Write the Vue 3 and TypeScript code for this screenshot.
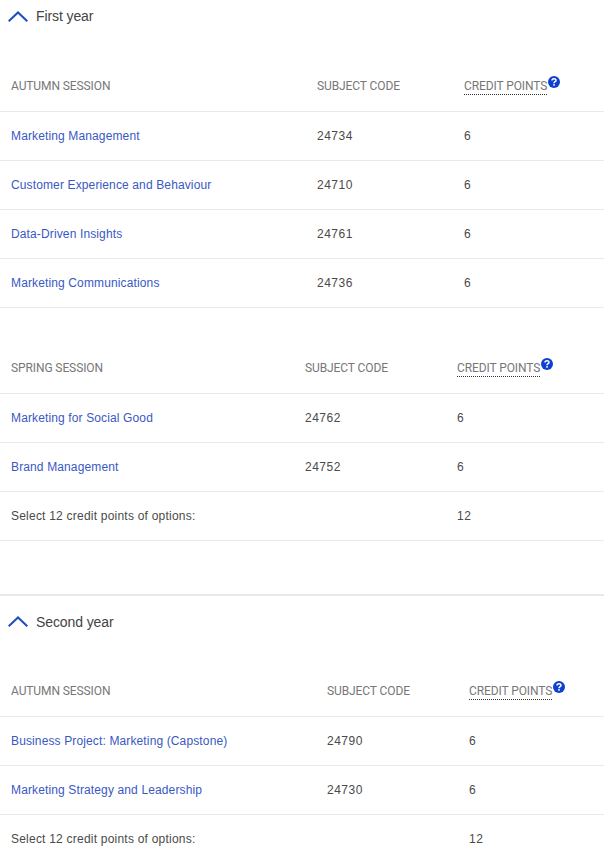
<script setup lang="ts">
interface Row { name: string; code?: string; cp: string; link: boolean }
interface Table { title: string; cols: string; rows: Row[] }
interface Section { title: string; tables: Table[] }
const r = (name: string, code: string, cp = '6'): Row => ({ name, code, cp, link: true })
const opt: Row = { name: 'Select 12 credit points of options:', cp: '12', link: false }
const sections: Section[] = [
  { title: 'First year', tables: [
    { title: 'AUTUMN SESSION', cols: 'c1', rows: [r('Marketing Management', '24734'), r('Customer Experience and Behaviour', '24710'), r('Data-Driven Insights', '24761'), r('Marketing Communications', '24736')] },
    { title: 'SPRING SESSION', cols: 'c2', rows: [r('Marketing for Social Good', '24762'), r('Brand Management', '24752'), opt] },
  ] },
  { title: 'Second year', tables: [
    { title: 'AUTUMN SESSION', cols: 'c3', rows: [r('Business Project: Marketing (Capstone)', '24790'), r('Marketing Strategy and Leadership', '24730'), opt] },
  ] },
]
</script>

<template>
  <main class="page">
    <section v-for="s in sections" :key="s.title" class="section">
      <h2 class="year">
        <svg class="chev" width="20" height="11" viewBox="0 0 20 11" aria-hidden="true"><path d="M0.7 10.3 L10 1.5 L19.3 10.3" fill="none" stroke="#1d4fc4" stroke-width="2" /></svg>
        <span>{{ s.title }}</span>
      </h2>
      <div v-for="t in s.tables" :key="t.title" class="tbl" :class="t.cols">
        <div class="row head">
          <div>{{ t.title }}</div>
          <div>SUBJECT CODE</div>
          <div class="cp"><span class="dotted">CREDIT POINTS</span><svg class="q" width="12" height="12" viewBox="0 0 12 12" aria-hidden="true"><circle cx="6" cy="6" r="6" fill="#0f3fd0" /><path d="M4 4.6 C4 2.3 8 2.3 8 4.4 C8 5.8 6 5.6 6 7.2" fill="none" stroke="#fff" stroke-width="1.5" /><rect x="5.2" y="8.1" width="1.6" height="1.6" fill="#fff" /></svg></div>
        </div>
        <div v-for="row in t.rows" :key="row.name" class="row">
          <div :class="row.link ? 'link' : 'note'">{{ row.name }}</div>
          <div class="num">{{ row.code }}</div>
          <div class="num">{{ row.cp }}</div>
        </div>
      </div>
    </section>
  </main>
</template>

<style scoped>
.page { width: 604px; height: 857px; overflow: hidden; font-family: "Liberation Sans", Arial, sans-serif; font-size: 12px; color: #4a4a4a; background: #fff; }
.section + .section { border-top: 2px solid #e8e8e8; }
.section:first-child { padding-bottom: 19px; margin-top: -1px; }
.year { display: flex; align-items: center; gap: 8px; margin: 0; padding: 0 0 0 8px; height: 34px; font-size: 14px; font-weight: 400; color: #444; letter-spacing: -0.1px; }
.tbl { margin-bottom: 34px; }
.year + .tbl { margin-top: 27px; }
.section + .section .year { height: 51px; }
.section + .section .year + .tbl { margin-top: 18px; }
.row { display: grid; height: 49px; align-items: center; padding-left: 11px; border-bottom: 1px solid #e9e9e9; letter-spacing: 0.13px; box-sizing: border-box; }
.num { letter-spacing: 0.5px; }
.note { letter-spacing: 0.22px; }
.c1 .row { grid-template-columns: 306px 147px 1fr; }
.c2 .row { grid-template-columns: 294px 152px 1fr; }
.c3 .row { grid-template-columns: 316px 142px 1fr; }
.head { height: 52px; color: #777; font-family: "Roboto", "Liberation Sans", sans-serif; letter-spacing: -0.1px; }
.link { color: #3a58c4; }
.cp { display: flex; align-items: flex-start; padding-top: 1px; }
.dotted { border-bottom: 1px dotted #333; line-height: 16px; }
.q { margin-top: -2px; margin-left: 1px; }
</style>
